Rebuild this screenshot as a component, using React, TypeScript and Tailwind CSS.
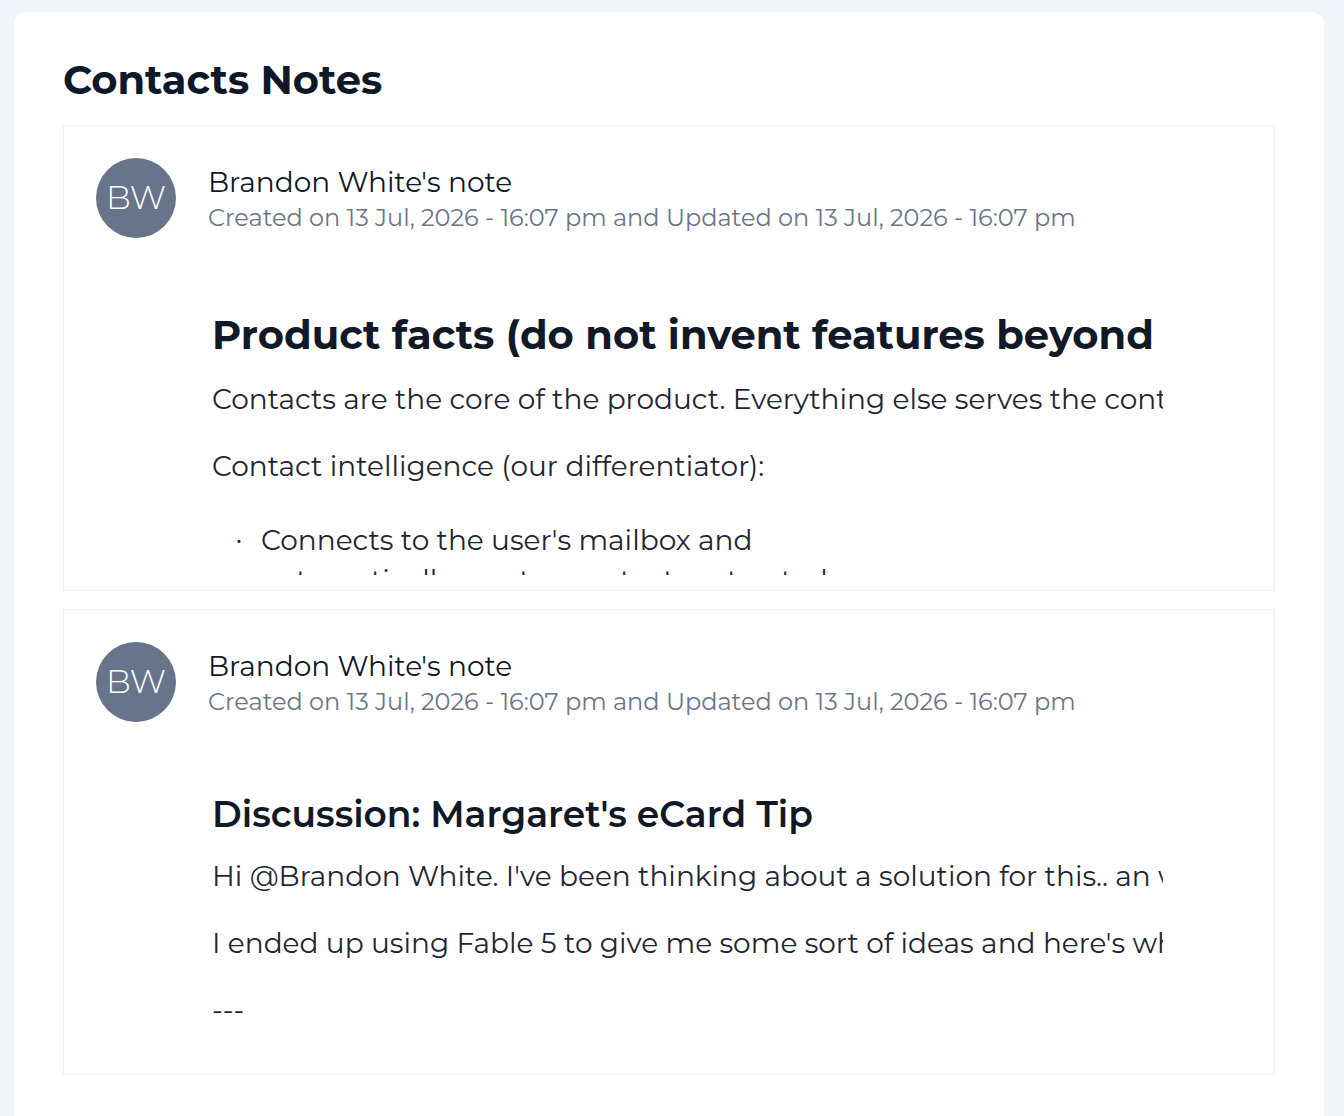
import { FC } from 'react';

type Block =
  | { kind: 'h1'; text: string }
  | { kind: 'h2'; text: string }
  | { kind: 'p'; text: string }
  | { kind: 'li'; text: string };

interface Note {
  id: number;
  author: string;
  initials: string;
  created: string;
  updated: string;
  body: Block[];
}

const NOTES: Note[] = [
  {
    id: 1,
    author: "Brandon White's note",
    initials: 'BW',
    created: '13 Jul, 2026 - 16:07 pm',
    updated: '13 Jul, 2026 - 16:07 pm',
    body: [
      { kind: 'h1', text: 'Product facts (do not invent features beyond these)' },
      { kind: 'p', text: 'Contacts are the core of the product. Everything else serves the contact record.' },
      { kind: 'p', text: 'Contact intelligence (our differentiator):' },
      { kind: 'li', text: "Connects to the user's mailbox and automatically creates contacts extracted from email signatures" },
    ],
  },
  {
    id: 2,
    author: "Brandon White's note",
    initials: 'BW',
    created: '13 Jul, 2026 - 16:07 pm',
    updated: '13 Jul, 2026 - 16:07 pm',
    body: [
      { kind: 'h2', text: "Discussion: Margaret's eCard Tip" },
      { kind: 'p', text: "Hi @Brandon White. I've been thinking about a solution for this.. an ways here it is" },
      { kind: 'p', text: "I ended up using Fable 5 to give me some sort of ideas and here's what it came up with" },
      { kind: 'p', text: '---' },
    ],
  },
];

const FONT = "font-['Montserrat','Inter','Liberation_Sans',sans-serif]";

// note preview is clipped, long lines are cut at the right edge
const NoteBody: FC<{ blocks: Block[] }> = ({ blocks }) => (
  <div className="ml-[116px] w-[951px] h-[337px] overflow-hidden text-[#1e2533]">
    {blocks.map((b, i) => {
      if (b.kind === 'h1')
        return (
          <h1 key={i} className="mt-[73px] whitespace-nowrap text-[40px] leading-[48px] font-bold text-[#111827]">
            {b.text}
          </h1>
        );
      if (b.kind === 'h2')
        return (
          <h2 key={i} className="mt-[70px] whitespace-nowrap text-[36px] leading-[44px] font-semibold text-[#111827]">
            {b.text}
          </h2>
        );
      if (b.kind === 'li')
        return (
          <ul key={i} className="mt-[34px] pl-[24px]">
            <li className="flex w-[600px] text-[28px] leading-[40px]">
              <span className="w-[25px] shrink-0 text-[20px]">•</span>
              <span>{b.text}</span>
            </li>
          </ul>
        );
      return (
        <p key={i} className={`${i === 1 ? 'mt-[20px]' : 'mt-[27px]'} whitespace-nowrap text-[28px] leading-[40px]`}>
          {b.text}
        </p>
      );
    })}
  </div>
);

const NoteCard: FC<{ note: Note }> = ({ note }) => (
  <div className="h-[466px] border border-[#eceef1] bg-white p-[32px] pb-[16px]">
    <div className="flex items-center gap-[32px]">
      <div className="flex h-[80px] w-[80px] shrink-0 items-center justify-center rounded-full bg-[#687489] text-[33px] font-light text-white">
        {note.initials}
      </div>
      <div className="mt-[4px] flex flex-col">
        <span className="text-[28px] leading-[36px] text-[#111827]">{note.author}</span>
        <span className="text-[24px] leading-[36px] text-[#6b7588]">
          Created on {note.created} and Updated on {note.updated}
        </span>
      </div>
    </div>
    <NoteBody blocks={note.body} />
  </div>
);

export default function App() {
  return (
    <div className={`min-h-[1116px] bg-[#f1f4f8] pt-[12px] pl-[14px] pr-[20px] ${FONT}`}>
      <div className="min-h-[1104px] rounded-t-[12px] bg-white px-[49px] pt-[44px]">
        <h1 className="mb-[21px] text-[40px] leading-[48px] font-bold text-[#0f172a]">Contacts Notes</h1>
        <div className="flex flex-col gap-[18px]">
          {NOTES.map((n) => (
            <NoteCard key={n.id} note={n} />
          ))}
        </div>
      </div>
    </div>
  );
}
